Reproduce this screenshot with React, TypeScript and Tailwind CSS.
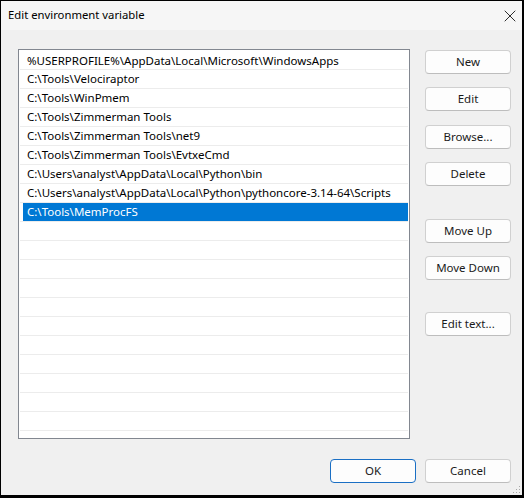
import { X } from "lucide-react";

const paths = [
  "%USERPROFILE%\\AppData\\Local\\Microsoft\\WindowsApps",
  "C:\\Tools\\Velociraptor",
  "C:\\Tools\\WinPmem",
  "C:\\Tools\\Zimmerman Tools",
  "C:\\Tools\\Zimmerman Tools\\net9",
  "C:\\Tools\\Zimmerman Tools\\EvtxeCmd",
  "C:\\Users\\analyst\\AppData\\Local\\Python\\bin",
  "C:\\Users\\analyst\\AppData\\Local\\Python\\pythoncore-3.14-64\\Scripts",
  "C:\\Tools\\MemProcFS",
];

const selectedIndex = 8;
const rowCount = 21;

const font = "font-['Noto_Sans','Segoe_UI',sans-serif]";

type DialogButtonProps = {
  label: string;
  primary?: boolean;
  className?: string;
};

function DialogButton({ label, primary = false, className = "" }: DialogButtonProps) {
  return (
    <button
      type="button"
      className={`flex h-[24px] w-[86px] items-center justify-center rounded-[4px] border bg-[#fdfdfd] text-[11.5px] leading-none text-[#1a1a1a] ${
        primary ? "border-[#1a6fc4]" : "border-[#d0d0d0] border-b-[#bdbdbd]"
      } ${className}`}
    >
      {label}
    </button>
  );
}

function PathList() {
  const rows = Array.from({ length: rowCount }, (_, i) => paths[i] ?? "");

  return (
    <div className="h-[390px] w-[392px] shrink-0 overflow-hidden border border-[#828790] bg-white px-[1px] pt-[1px]">
      {rows.map((path, i) => (
        <div
          key={i}
          className={`h-[19px] border-b border-[#ececec] ${i === 0 ? "pt-[1px]" : ""}`}
        >
          <div
            className={`flex h-[18px] items-center whitespace-nowrap pl-[7px] text-[11.5px] leading-none ${
              i === selectedIndex ? "ml-[3px] bg-[#0078d4] !pl-[4px] text-white" : "text-black"
            }`}
          >
            {path}
          </div>
        </div>
      ))}
    </div>
  );
}

export default function App() {
  return (
    <div
      className={`relative flex h-[498px] w-[524px] flex-col border-t border-r-2 border-b-[3px] border-l border-black bg-[#f0f0f0] ${font}`}
    >
      <div className="flex h-[29px] shrink-0 items-center justify-between bg-[#f6f6f6] pl-[7px] pr-[2px]">
        <span className="text-[11.3px] text-black">Edit environment variable</span>
        <X className="size-[20px] text-[#1a1a1a]" strokeWidth={1.1} />
      </div>

      <div className="flex pl-[17px] pt-[19px]">
        <PathList />
        <div className="ml-[15px] flex flex-col">
          <DialogButton label="New" className="mt-[1px]" />
          <DialogButton label="Edit" className="mt-[13px]" />
          <DialogButton label="Browse..." className="mt-[14px]" />
          <DialogButton label="Delete" className="mt-[13px]" />
          <DialogButton label="Move Up" className="mt-[33px]" />
          <DialogButton label="Move Down" className="mt-[13px]" />
          <DialogButton label="Edit text..." className="mt-[32px]" />
        </div>
      </div>

      <div className="mt-[20px] flex justify-end gap-[9px] pr-[11px]">
        <DialogButton label="OK" primary />
        <DialogButton label="Cancel" />
      </div>

      {/* size grip */}
      <svg className="absolute bottom-[1px] right-[1px]" width="8" height="8" viewBox="0 0 8 8">
        <g fill="#a8a8a8">
          <rect x="6" y="0" width="1" height="1" />
          <rect x="3" y="3" width="1" height="1" />
          <rect x="6" y="3" width="1" height="1" />
          <rect x="0" y="6" width="1" height="1" />
          <rect x="3" y="6" width="1" height="1" />
          <rect x="6" y="6" width="1" height="1" />
        </g>
      </svg>
    </div>
  );
}
